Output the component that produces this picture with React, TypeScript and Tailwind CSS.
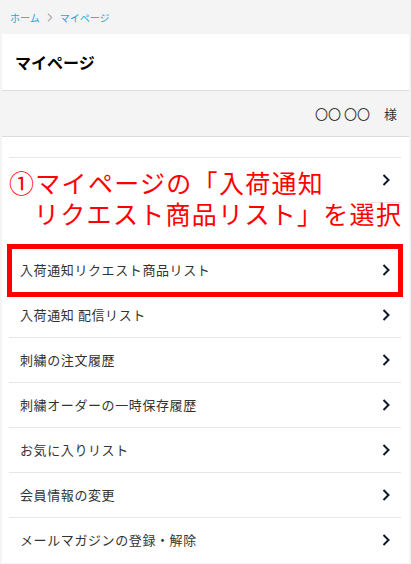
import React from "react";

const Chevron = ({ className = "" }: { className?: string }) => (
  <svg width="8" height="12" viewBox="0 0 8 12" className={className} fill="none">
    <path d="M1.5 1 L6.5 6 L1.5 11" stroke="#111827" strokeWidth="2" />
  </svg>
);

const items = [
  "入荷通知 配信リスト",
  "刺繍の注文履歴",
  "刺繍オーダーの一時保存履歴",
  "お気に入りリスト",
  "会員情報の変更",
  "メールマガジンの登録・解除",
];

export default function App() {
  return (
    <div
      className="min-h-[564px] w-[411px] bg-[#f4f4f4] text-[#333]"
      style={{ fontFamily: '"Noto Sans CJK JP", "Noto Sans", sans-serif' }}
    >
      {/* breadcrumb */}
      <div className="h-[34px] flex items-center pl-[10px] text-[10px] text-[#29a3da] gap-[6px]">
        <span>ホーム</span>
        <svg width="6" height="9" viewBox="0 0 6 9" fill="none" className="mx-[1px]">
          <path d="M1 0.8 L4.6 4.5 L1 8.2" stroke="#b5b5b5" strokeWidth="1.4" />
        </svg>
        <span>マイページ</span>
      </div>

      {/* title */}
      <div className="mx-[2px] h-[57px] bg-white border-b border-[#dcdcdc] flex items-center pl-[13px]">
        <h1 className="text-[16px] font-bold text-black">マイページ</h1>
      </div>

      {/* name band */}
      <div className="mx-[2px] h-[46px] border-b border-[#dcdcdc] flex items-center justify-end pr-[12px] text-[13px] text-[#333]">
        <span>〇〇 〇〇</span>
        <span className="ml-[14px]">様</span>
      </div>

      {/* list card */}
      <div className="relative mx-[2px] bg-white pt-[20px] pb-[1px]">
        <div className="ml-[7px] mr-[8px] tracking-[0.6px]">
          <div className="h-[45px] border-t border-[#e6e6e6] flex items-center justify-end pr-[11px]">
            <Chevron />
          </div>
          <div className="h-[45px] border-t border-[#e6e6e6] flex items-center justify-end pr-[11px]">
            <Chevron />
          </div>
          <div className="relative h-[45px] border-t border-[#e6e6e6] flex items-center justify-between pl-[11px] pr-[11px] text-[13px]">
            <span>入荷通知リクエスト商品リスト</span>
            <Chevron />
            <div className="absolute left-[-2px] right-[-2px] top-[-4px] bottom-[-5px] border-[5px] border-[#ff0000]" />
          </div>
          {items.map((t) => (
            <div
              key={t}
              className="h-[45px] border-t border-[#e6e6e6] flex items-center justify-between pl-[11px] pr-[11px] text-[13px]"
            >
              <span>{t}</span>
              <Chevron />
            </div>
          ))}
        </div>

        {/* annotation overlay */}
        <div className="absolute left-[5px] top-[23px]">
          <div className="w-[363px] h-[43px] bg-white" />
          <div className="w-[397px] h-[38px] bg-white" />
          <p
            className="absolute left-[27px] top-[9px] indent-[-25px] text-[#ff0000] text-[25px] leading-[30.5px] tracking-[1.3px] whitespace-nowrap"
            style={{ fontFamily: '"Liberation Sans", "Noto Sans CJK JP", sans-serif' }}
          >
            ①マイページの「入荷通知
            <br />
            リクエスト商品リスト」を選択
          </p>
        </div>
      </div>
    </div>
  );
}
